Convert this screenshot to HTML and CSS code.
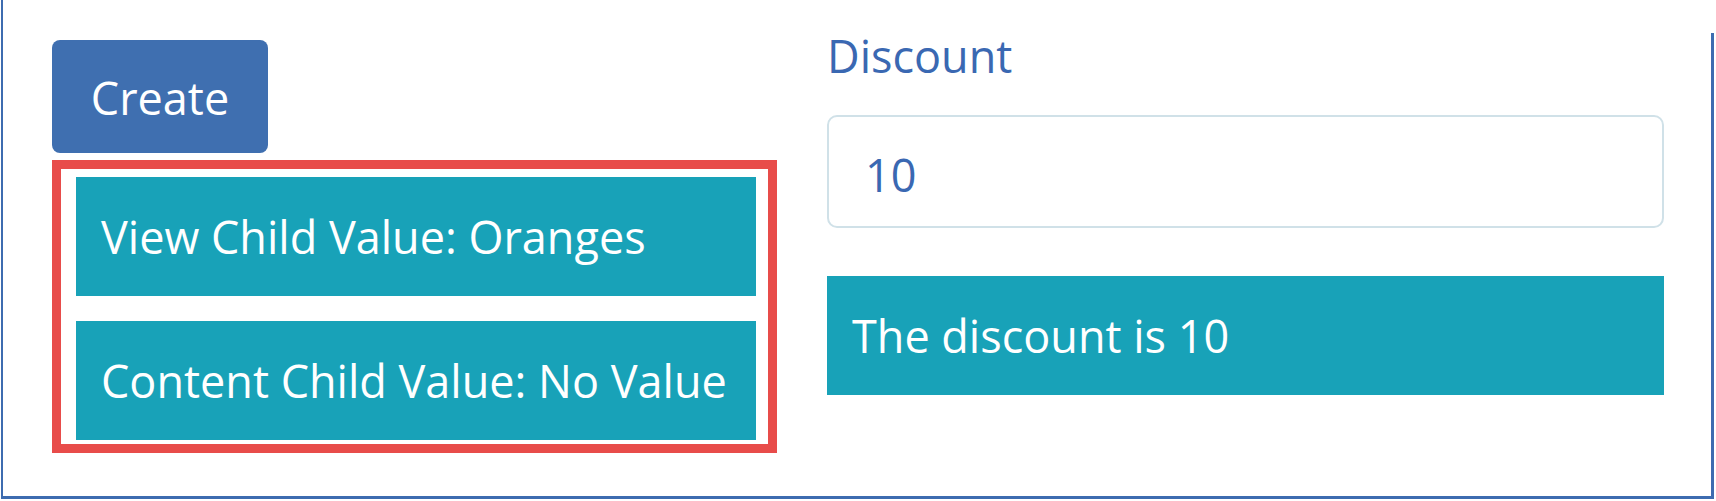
FILE: index.html
```html
<!DOCTYPE html>
<html lang="en">
<head>
<meta charset="utf-8">
<title>Discount</title>
<link rel="stylesheet" href="styles.css">
</head>
<body>
<div class="frame">
  <div class="layout">
    <div class="col-left">
      <button class="btn-create" type="button">Create</button>
      <div class="highlight">
        <div class="info">View Child Value: Oranges</div>
        <div class="info">Content Child Value: No Value</div>
      </div>
    </div>
    <div class="col-right">
      <label class="field-label" for="discount">Discount</label>
      <input id="discount" class="field-input" type="text" value="10">
      <div class="info">The discount is 10</div>
    </div>
  </div>
</div>
</body>
</html>
```
FILE: styles.css
```css
html, body {
  margin: 0;
  background: #ffffff;
}

body {
  font-family: "Open Sans", "Noto Sans", sans-serif;
  font-size: 45px;
  line-height: 61px;
}

.frame {
  position: relative;
  margin-left: 1px;
  width: 1710px;
  height: 499px;
  box-sizing: border-box;
  border-left: 2px solid #3d6cb0;
  border-bottom: 3px solid #3d6cb0;
}

.frame::after {
  content: "";
  position: absolute;
  right: -3px;
  top: 33px;
  bottom: -3px;
  width: 3px;
  background: #3d6cb0;
}

.layout {
  display: grid;
  grid-template-columns: 725px 837px;
  column-gap: 50px;
  padding-left: 49px;
}

.col-left {
  padding-top: 40px;
}

.btn-create {
  display: block;
  width: 216px;
  height: 113px;
  padding: 27px 0 25px;
  border: 0;
  border-radius: 8px;
  background: #3f6fb0;
  color: #ffffff;
  font: inherit;
  line-height: 61px;
}

.highlight {
  margin-top: 7px;
  width: 725px;
  box-sizing: border-box;
  border: 9px solid #e84c4a;
  padding: 8px 12px 4px 15px;
}

.info {
  background: #18a2b8;
  color: #ffffff;
  padding: 29px 25px;
  white-space: nowrap;
}

.highlight .info + .info {
  margin-top: 25px;
}

.col-right {
  padding-top: 25px;
}

.field-label {
  display: block;
  color: #3a68b2;
}

.field-input {
  display: block;
  margin: 29px 0 0;
  width: 837px;
  height: 113px;
  box-sizing: border-box;
  border: 2px solid #d0e1e8;
  border-radius: 10px;
  padding: 6px 36px 0;
  font: inherit;
  color: #3a68b2;
  background: #ffffff;
  outline: none;
}

.col-right .info {
  margin-top: 48px;
}
```
